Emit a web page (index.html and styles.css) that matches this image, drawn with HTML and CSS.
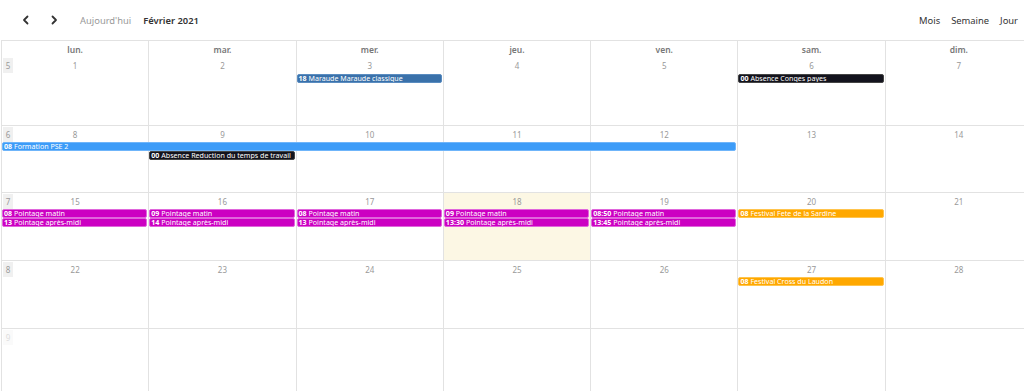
FILE: index.html
```html
<!DOCTYPE html>
<html lang="fr">
<head>
  <meta charset="UTF-8">
  <meta name="viewport" content="width=device-width, initial-scale=1.0">
  <title>Calendrier</title>
  <link rel="stylesheet" href="styles.css">
</head>
<body>
  <div class="toolbar">
    <div class="toolbar-left">
      <button class="nav-btn" aria-label="Précédent">
        <svg width="10" height="10" viewBox="0 0 10 10"><path d="M6.5 1.5 L3 5 L6.5 8.5" fill="none" stroke="#333" stroke-width="1.8" stroke-linecap="round" stroke-linejoin="round"/></svg>
      </button>
      <button class="nav-btn" aria-label="Suivant">
        <svg width="10" height="10" viewBox="0 0 10 10"><path d="M3.5 1.5 L7 5 L3.5 8.5" fill="none" stroke="#333" stroke-width="1.8" stroke-linecap="round" stroke-linejoin="round"/></svg>
      </button>
      <span class="today-btn">Aujourd'hui</span>
      <span class="title">Février 2021</span>
    </div>
    <div class="toolbar-right">
      <span class="view-btn">Mois</span>
      <span class="view-btn">Semaine</span>
      <span class="view-btn">Jour</span>
    </div>
  </div>

  <div class="calendar">
    <div class="head">
      <div class="head-cell">lun.</div>
      <div class="head-cell">mar.</div>
      <div class="head-cell">mer.</div>
      <div class="head-cell">jeu.</div>
      <div class="head-cell">ven.</div>
      <div class="head-cell">sam.</div>
      <div class="head-cell">dim.</div>
    </div>

    <div class="week">
      <div class="day c1"><span class="week-num">5</span>1</div>
      <div class="day c2">2</div>
      <div class="day c3">3</div>
      <div class="day c4">4</div>
      <div class="day c5">5</div>
      <div class="day c6">6</div>
      <div class="day c7">7</div>
      <div class="event blue c3 r1"><b>18</b> Maraude Maraude classique</div>
      <div class="event black c6 r1"><b>00</b> Absence Conges payes</div>
    </div>

    <div class="week">
      <div class="day c1"><span class="week-num">6</span>8</div>
      <div class="day c2">9</div>
      <div class="day c3">10</div>
      <div class="day c4">11</div>
      <div class="day c5">12</div>
      <div class="day c6">13</div>
      <div class="day c7">14</div>
      <div class="event sky span-1-5 r1"><b>08</b> Formation PSE 2</div>
      <div class="event black c2 r2"><b>00</b> Absence Reduction du temps de travail</div>
    </div>

    <div class="week">
      <div class="day c1"><span class="week-num">7</span>15</div>
      <div class="day c2">16</div>
      <div class="day c3">17</div>
      <div class="day c4 today">18</div>
      <div class="day c5">19</div>
      <div class="day c6">20</div>
      <div class="day c7">21</div>
      <div class="event pink c1 r1"><b>08</b> Pointage matin</div>
      <div class="event pink c1 r2"><b>13</b> Pointage après-midi</div>
      <div class="event pink c2 r1"><b>09</b> Pointage matin</div>
      <div class="event pink c2 r2"><b>14</b> Pointage après-midi</div>
      <div class="event pink c3 r1"><b>08</b> Pointage matin</div>
      <div class="event pink c3 r2"><b>13</b> Pointage après-midi</div>
      <div class="event pink c4 r1"><b>09</b> Pointage matin</div>
      <div class="event pink c4 r2"><b>13:30</b> Pointage après-midi</div>
      <div class="event pink c5 r1"><b>08:50</b> Pointage matin</div>
      <div class="event pink c5 r2"><b>13:45</b> Pointage après-midi</div>
      <div class="event orange c6 r1"><b>08</b> Festival Fete de la Sardine</div>
    </div>

    <div class="week">
      <div class="day c1"><span class="week-num">8</span>22</div>
      <div class="day c2">23</div>
      <div class="day c3">24</div>
      <div class="day c4">25</div>
      <div class="day c5">26</div>
      <div class="day c6">27</div>
      <div class="day c7">28</div>
      <div class="event orange c6 r1"><b>08</b> Festival Cross du Laudon</div>
    </div>

    <div class="week">
      <div class="day c1"><span class="week-num faded">9</span></div>
      <div class="day c2"></div>
      <div class="day c3"></div>
      <div class="day c4"></div>
      <div class="day c5"></div>
      <div class="day c6"></div>
      <div class="day c7"></div>
    </div>
  </div>
</body>
</html>
```

FILE: styles.css
```css
html, body {
  margin: 0;
  padding: 0;
  overflow: hidden;
}
body {
  background-color: white;
  font-family: 'Noto Sans', 'Open Sans', sans-serif;
  color: #333;
  width: 1024px;
  height: 391px;
}
.toolbar {
  display: flex;
  justify-content: space-between;
  align-items: center;
  height: 40px;
  padding: 0 6px 0 14px;
  font-size: 9.4px;
}
.toolbar-left,
.toolbar-right {
  display: flex;
  align-items: center;
}
.nav-btn {
  width: 24px;
  height: 20px;
  margin-right: 4px;
  padding: 0;
  border: none;
  background: none;
  display: flex;
  align-items: center;
  justify-content: center;
}
.today-btn {
  margin-left: 10px;
  color: #999;
}
.title {
  margin-left: 12px;
  font-weight: 600;
}
.view-btn {
  margin-left: 11px;
}
.calendar {
  width: 1031px;
  margin-left: 1px;
  border-left: 1px solid #e2e2e2;
  border-top: 1px solid #e2e2e2;
}
.head {
  display: grid;
  grid-template-columns: repeat(7, 1fr);
  height: 16px;
}
.head-cell {
  border-right: 1px solid #e2e2e2;
  text-align: center;
  font-size: 8.5px;
  font-weight: 600;
  color: #777;
  line-height: 17px;
}
.week {
  display: grid;
  grid-template-columns: repeat(7, 1fr);
  grid-template-rows: 17px 9px 9px 1fr;
  height: 68px;
  box-sizing: border-box;
  border-bottom: 1px solid #e2e2e2;
}
.week:nth-child(2) {
  height: 69px;
}
.week:nth-child(3) {
  height: 67px;
  grid-template-rows: 16px 9px 9px 1fr;
}
.week:nth-child(4),
.week:nth-child(5) {
  grid-template-rows: 16px 9px 9px 1fr;
}
.day {
  grid-row: 1 / -1;
  position: relative;
  border-right: 1px solid #e2e2e2;
  text-align: center;
  font-size: 8px;
  line-height: 17px;
  color: #999;
}
.today {
  background-color: #fcf7e4;
}
.week-num {
  position: absolute;
  top: 1px;
  left: 1px;
  width: 10px;
  height: 15px;
  line-height: 15px;
  background-color: #f0f0f0;
  color: #9a9a9a;
  font-size: 8px;
}
.week-num.faded {
  background-color: #fafafa;
  color: #ddd;
}
.c1 { grid-column: 1; }
.c2 { grid-column: 2; }
.c3 { grid-column: 3; }
.c4 { grid-column: 4; }
.c5 { grid-column: 5; }
.c6 { grid-column: 6; }
.c7 { grid-column: 7; }
.span-1-5 { grid-column: 1 / 6; }
.r1 { grid-row: 2; }
.r2 { grid-row: 3; }
.event {
  position: relative;
  z-index: 1;
  height: 9px;
  margin: 0 2px 0 0;
  padding-left: 1px;
  box-sizing: border-box;
  border: 1px solid transparent;
  border-radius: 2px;
  font-size: 7.1px;
  line-height: 7px;
  color: white;
  white-space: nowrap;
  overflow: hidden;
}
.event b {
  font-weight: 700;
}
.blue {
  background-color: #3a71aa;
  border-color: #5a8cc0;
}
.black {
  background-color: #13131d;
  border-color: #444;
}
.sky {
  background-color: #3d9cf8;
  border-color: #6fb5fa;
}
.pink {
  background-color: #cc00c2;
  border-color: #e066dc;
}
.orange {
  background-color: #ffa800;
  border-color: #ffc44d;
}
```
